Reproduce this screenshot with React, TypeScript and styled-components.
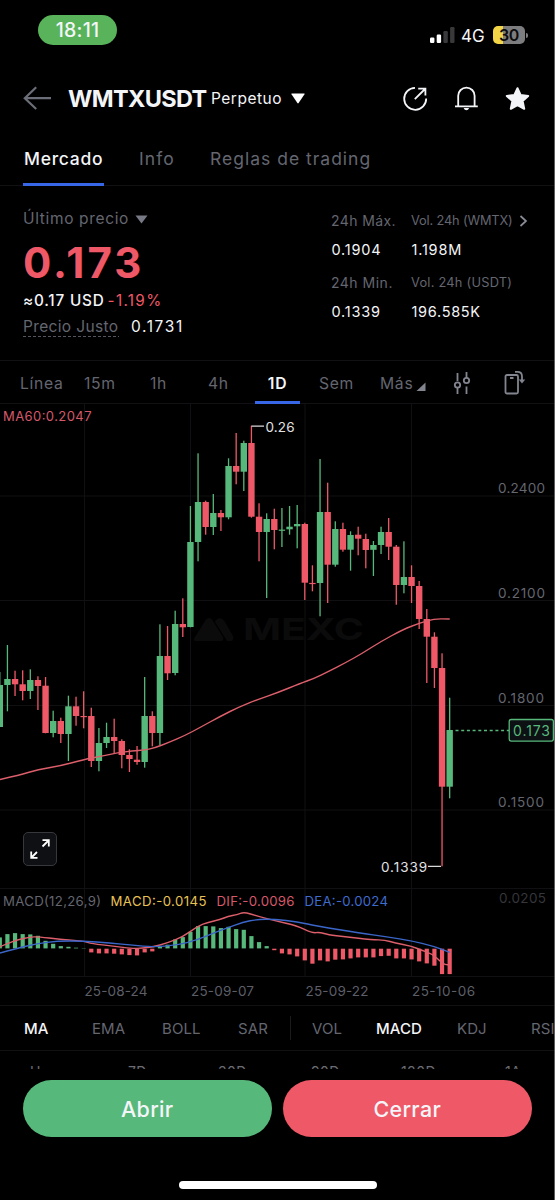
import React from "react";
import styled, { createGlobalStyle } from "styled-components";

const C = {
  bg: "#000000",
  line: "#111113",
  grid: "#101013",
  text: "#f4f5f8",
  muted: "#646670",
  icon: "#82858f",
  up: "#57b87b",
  down: "#ee5867",
  blue: "#3767e6",
  yellow: "#e9c254",
};

const Global = createGlobalStyle`
  * { box-sizing: border-box; }
  html, body { margin: 0; background: ${C.bg}; }
  body { font-family: Inter, "Liberation Sans", sans-serif; color: ${C.text}; }
  button { font: inherit; color: inherit; background: none; border: 0; padding: 0; text-align: left; }
`;

const Screen = styled.main`
  width: 555px;
  height: 1200px;
  overflow: hidden;
  display: flex;
  flex-direction: column;
  background: ${C.bg};
  border-right: 1px solid #5c5c5e;
`;

interface TextProps {
  $size?: number;
  $ls?: number;
  $color?: string;
  $weight?: number;
}
const Text = styled.span<TextProps>`
  font-size: ${(p) => p.$size ?? 15}px;
  letter-spacing: ${(p) => p.$ls ?? 0}px;
  color: ${(p) => p.$color ?? C.text};
  font-weight: ${(p) => p.$weight ?? 400};
  line-height: 20px;
  white-space: nowrap;
`;

/* Status bar */
const StatusBar = styled.header`
  height: 66px;
  flex: none;
  display: flex;
  justify-content: space-between;
  padding: 15px 26px 0 38px;
`;
const TimePill = styled.div`
  width: 79px;
  height: 30px;
  border-radius: 15px;
  background: #59b35a;
  display: flex;
  align-items: center;
  justify-content: center;
  font-size: 19.5px;
  font-weight: 500;
  letter-spacing: 0.2px;
`;
const StatusRight = styled.div`
  display: flex;
  align-items: center;
  height: 40px;
`;
const Network = styled.span`
  font-size: 17px;
  font-weight: 400;
  width: 32px;
  margin-left: 6px;
  padding-top: 1px;
`;
const Battery = styled.div`
  width: 32px;
  height: 18px;
  border-radius: 5px;
  background: linear-gradient(90deg, #f3d548 0 10px, #7d7d80 10px);
  color: #0c0c0c;
  font-size: 16px;
  font-weight: 600;
  line-height: 18px;
  text-align: center;
  letter-spacing: -0.3px;
`;
const BatteryNub = styled.div`
  width: 2px;
  height: 5px;
  margin-left: 1px;
  border-radius: 0 2px 2px 0;
  background: #7d7d80;
`;

/* Header */
const Header = styled.div`
  height: 64px;
  flex: none;
  display: flex;
  align-items: center;
  padding: 0 24px 0 23px;
`;
const PairButton = styled.button`
  display: flex;
  align-items: center;
  margin-left: 17px;
`;
const PairName = styled.h1`
  margin: 0;
  width: 143px;
  padding-top: 1px;
  font-size: 23.5px;
  font-weight: 700;
  letter-spacing: -0.65px;
  line-height: 28px;
  white-space: nowrap;
`;
const PairKind = styled.span`
  width: 80px;
  padding-top: 2px;
  font-size: 15.5px;
  letter-spacing: 0.5px;
  line-height: 20px;
`;
const HeaderIcons = styled.div`
  margin-left: auto;
  display: flex;
  gap: 26px;
`;

/* Page tabs */
const PageTabs = styled.nav`
  height: 56px;
  flex: none;
  display: flex;
  padding-left: 23px;
  gap: 34px;
  border-bottom: 1px solid ${C.line};
`;
const PageTab = styled.button<{ $active?: boolean; $width: number; $ls: number }>`
  width: ${(p) => p.$width}px;
  height: 56px;
  padding-left: 1px;
  padding-top: 3px;
  font-size: 17.5px;
  font-weight: ${(p) => (p.$active ? 500 : 400)};
  letter-spacing: ${(p) => p.$ls}px;
  white-space: nowrap;
  color: ${(p) => (p.$active ? C.text : C.muted)};
  border-bottom: 3px solid ${(p) => (p.$active ? C.blue : "transparent")};
`;

/* Price summary */
const Summary = styled.section`
  height: 174px;
  flex: none;
  display: flex;
  justify-content: space-between;
  padding: 22px 20px 0 23px;
`;
const PriceBlock = styled.div`
  display: flex;
  flex-direction: column;
  padding-top: 1px;
`;
const Line = styled.div<{ $gap?: number; $mt?: number }>`
  display: flex;
  align-items: center;
  height: 20px;
  gap: ${(p) => p.$gap ?? 0}px;
  margin-top: ${(p) => p.$mt ?? 0}px;
`;
const BigPrice = styled.div`
  margin-top: 14px;
  height: 40px;
  line-height: 40px;
  font-size: 42px;
  font-weight: 700;
  letter-spacing: 3px;
  color: ${C.down};
`;
const Dashed = styled(Text)`
  width: 96px;
  background: repeating-linear-gradient(90deg, #55565e 0 3px, transparent 3px 5px) left bottom / 100% 1px no-repeat;
`;
const Stats = styled.div`
  display: grid;
  grid-template-columns: 80px 120px;
  grid-template-rows: 28px 34px 28px 28px;
  padding-top: 3px;
  margin-right: -20px;
  width: 223px;
`;
const Value = styled(Text)`
  font-size: 14.5px;
  padding: 0.5px 0 0 0.5px;
`;

/* Time frames */
const Frames = styled.nav`
  height: 44px;
  flex: none;
  display: grid;
  grid-template-columns: 64px 66px 58px 47px 64px 61px 73px 51px 40px;
  padding-left: 20px;
  border-top: 1px solid ${C.line};
  border-bottom: 1px solid ${C.line};
`;
const Frame = styled.button<{ $active?: boolean }>`
  display: flex;
  align-items: center;
  height: 43px;
  padding-top: 1px;
  font-size: 15.7px;
  letter-spacing: 0.7px;
  white-space: nowrap;
  color: ${(p) => (p.$active ? C.text : C.muted)};
  font-weight: ${(p) => (p.$active ? 600 : 400)};
  ${(p) =>
    p.$active &&
    `width: 45px; justify-content: center; border-bottom: 3px solid ${C.blue}; padding-top: 4px;`}
`;

/* Chart */
const ChartArea = styled.section`
  position: relative;
  height: 601px;
  flex: none;
  svg { display: block; }
`;
const ExpandButton = styled.button`
  position: absolute;
  left: 23px;
  top: 428px;
  width: 34px;
  height: 34px;
  border: 1px solid #37383d;
  border-radius: 5px;
  background: #0f1013;
  display: flex;
  align-items: center;
  justify-content: center;
`;

/* Indicators */
const Indicators = styled.nav`
  height: 46px;
  flex: none;
  display: grid;
  align-items: center;
  grid-template-columns: 68px 70px 76px 52px 22px 64px 81px 74px 40px;
  padding-left: 24px;
  border-top: 1px solid ${C.line};
  border-bottom: 1px solid ${C.line};
`;
const Indicator = styled.button<{ $active?: boolean }>`
  font-size: 15px;
  letter-spacing: 0.1px;
  color: ${(p) => (p.$active ? C.text : C.muted)};
  font-weight: ${(p) => (p.$active ? 500 : 400)};
`;
const Divider = styled.i`
  width: 1px;
  height: 24px;
  background: #1b1b1e;
`;

const Ranges = styled.div`
  height: 18px;
  flex: none;
  overflow: hidden;
  display: grid;
  grid-template-columns: 98px 90px 93px 90px 104px 40px;
  padding: 11px 0 0 30px;
  line-height: 20px;
  font-size: 14px;
  letter-spacing: 0.4px;
  color: #6c6d74;
`;

/* Bottom actions */
const Actions = styled.footer`
  flex: none;
  display: flex;
  gap: 11.5px;
  padding: 11px 22.5px 0 23px;
`;
const Action = styled.button<{ $color: string }>`
  flex: 1;
  height: 57px;
  border-radius: 29px;
  background: ${(p) => p.$color};
  text-align: center;
  font-size: 21.5px;
  font-weight: 500;
  letter-spacing: 0.3px;
`;
const HomeBar = styled.div`
  flex: none;
  width: 197.5px;
  height: 7.5px;
  margin: 44px 0 0 179px;
  border-radius: 4px;
  background: #fff;
`;

type Candle = [up: 0 | 1, high: number, low: number, top: number, bottom: number];
const candles: Candle[] = [
  [1, 672, 727, 685, 727], [1, 645, 711.3, 679, 685], [0, 670.7, 696, 679, 684.3],
  [0, 670.3, 700.3, 684.3, 691], [1, 669.3, 699, 680, 691], [0, 676.3, 710, 680, 686],
  [0, 677, 733.3, 685.7, 733], [1, 710.7, 737.3, 721, 733], [0, 717.7, 743, 721, 734],
  [1, 695.7, 761, 706.3, 734], [0, 696.7, 725.7, 706.3, 716], [0, 691.3, 728.3, 716, 717.2],
  [0, 707.7, 767, 716, 761], [1, 728, 771.3, 743, 761], [1, 722.7, 748, 737, 743],
  [0, 718.7, 753.3, 737, 741], [0, 739.3, 768.3, 741, 755], [0, 749.3, 772, 755, 759],
  [0, 746, 764.7, 759.7, 762], [1, 677, 767.7, 716, 762], [0, 711.3, 746.3, 716, 733],
  [1, 624.3, 745, 656, 733], [0, 626, 680, 656, 673.3], [1, 610.7, 675.3, 624, 673],
  [0, 598.3, 637, 624, 627.3], [1, 506, 627.3, 542, 627], [1, 453.3, 561.3, 502, 542],
  [0, 500.7, 534.7, 502, 527], [1, 494, 535, 513, 527], [0, 510, 531, 513, 517.3],
  [1, 458.3, 519.3, 466, 517.3], [0, 433, 484.3, 466, 471.7], [1, 440.7, 491, 443, 471.7],
  [0, 425.7, 517.7, 443, 516.7], [0, 503.3, 561.3, 516.7, 532], [1, 513.3, 598, 519, 532],
  [0, 508.7, 549.3, 519, 530], [1, 508, 547, 529.6, 530.8], [1, 506, 534.7, 526.7, 529.3],
  [1, 505, 548.3, 524, 526.3], [0, 522.7, 600, 524, 582.7], [0, 565.3, 591.3, 582.9, 584.1],
  [1, 459, 616.3, 512, 583], [0, 482.7, 603, 512, 564.7], [1, 521.3, 566.7, 529, 564.7],
  [0, 522.7, 551.7, 529, 549.7], [1, 531.3, 570.7, 535, 549.7], [0, 526.7, 555.3, 534.7, 538.7],
  [0, 533.7, 568.3, 539, 550], [1, 541, 576, 545, 549.8], [1, 526.7, 554, 532, 545],
  [0, 518, 560, 532, 546.7], [0, 545, 604.7, 546.7, 585], [1, 541.3, 593.3, 577, 585],
  [0, 565.3, 603, 577, 586], [0, 581, 629, 586, 619], [0, 609, 683, 619, 636.7],
  [0, 632.3, 688, 636.7, 668], [0, 653.3, 866.3, 668, 786.7], [1, 697.7, 798.3, 730, 786.7],
];

const histogram = [
  11, 14.3, 15.3, 14.3, 14, 12.6, 7.6, 4.6, 2.3, 1.6, 0.7, 0.3, -3.7, -4.7, -4.7, -5, -5.7, -6.4, -6.7,
  -3.7, -2.7, 1.7, 3.7, 9, 11.3, 16.6, 22.3, 22.3, 22, 20.3, 21.6, 19.3, 18.6, 12.3, 6.3, 2.3, -1.5,
  -4.7, -5.7, -7.7, -11.7, -15, -11.7, -12.7, -11, -10.7, -9.7, -8.7, -8.7, -8.7, -7.4, -7.1, -9.7,
  -9.7, -10.7, -12.7, -14.7, -17, -25.4, -25.4,
];

const ma60: [number, number][] = [
  [0, 779.5], [20, 775], [38, 769.5], [60, 766], [84, 759.5], [100, 756.5], [118, 752.7], [132, 751],
  [145, 750], [155, 747.8], [168, 742.7], [185, 735.5], [200, 727.5], [220, 716.5], [240, 706.5],
  [257.3, 699.7], [278, 692.5], [300, 683.5], [314, 678.5], [328, 671.7], [345, 663], [362, 653.5],
  [380, 642], [403, 629.5], [420, 623], [434, 618.8], [449.7, 619],
];
const dif: [number, number][] = [
  [0, 946.7], [7, 943.7], [17, 940], [30, 937], [38, 936.7], [60, 939.3], [83, 941], [92, 943.7],
  [113, 946], [133, 948.7], [142, 948], [153, 947], [167, 943], [183, 936.7], [198, 926], [208, 922.3],
  [220, 919.7], [228, 916.3], [237, 914.7], [244, 912], [257, 916], [275, 920.7], [297, 925.7],
  [312, 933], [320, 932.3], [328, 934.7], [345, 936.7], [372, 939.7], [385, 940], [395, 943],
  [411, 946], [421, 950], [433, 954.3], [441, 962], [445, 964.7], [449.7, 964.7],
];
const dea: [number, number][] = [
  [0, 953], [17, 948.3], [37, 943.7], [57, 941], [83, 941], [110, 943], [133, 945.3], [153, 947],
  [177, 945.3], [197, 940], [213, 933.3], [227, 928], [243, 922.3], [257, 919.3], [275, 919.3],
  [297, 921.7], [318, 926.3], [358, 932.7], [388, 937], [411, 940.7], [433, 946], [449.7, 952.3],
];

const xOf = (i: number) => -0.2 + i * 7.625;

const smooth = (pts: [number, number][]) => {
  let d = `M${pts[0][0]} ${pts[0][1]}`;
  for (let i = 1; i < pts.length - 1; i++) {
    const [x, y] = pts[i];
    const [nx, ny] = pts[i + 1];
    d += ` Q${x} ${y} ${(x + nx) / 2} ${(y + ny) / 2}`;
  }
  const last = pts[pts.length - 1];
  return `${d} L${last[0]} ${last[1]}`;
};

const Label = ({ x, y, w, size = 13.5, fill = C.muted, children }: {
  x: number; y: number; w: number; size?: number; fill?: string; children: string;
}) => (
  <text x={x} y={y} fontSize={size} textLength={w} fill={fill}>{children}</text>
);

const Chart = () => (
  <svg width="554" height="601" viewBox="0 404 554 601" fontFamily='Inter, "Liberation Sans", sans-serif'>
    <g stroke={C.grid}>
      {[84.5, 190.5, 305, 411.5].map((x) => <path key={x} d={`M${x} 404V976`} />)}
      {[496, 600.5, 705.5, 810, 888.5, 976.5].map((y) => <path key={y} d={`M0 ${y}H554`} />)}
    </g>
    <g fill="#0b0b0c">
      <path d="M195 641c-2-1-1-3 0-4l10-16c2-4 6-4 8 0l10 16c1 2 0 4-2 4z" />
      <path d="M215 622c2-5 7-5 10 0l8 14c1 3 0 5-3 5h-3z" />
      <text x="243" y="640" fontSize="30" fontWeight="700" textLength="121" lengthAdjust="spacingAndGlyphs">MEXC</text>
    </g>
    {candles.map(([up, high, low, top, bottom], i) => (
      <g key={i} fill={up ? C.up : C.down}>
        <rect x={xOf(i) - 0.65} y={high} width="1.3" height={low - high} />
        <rect x={xOf(i) - 3.2} y={top} width="6.4" height={bottom - top} />
      </g>
    ))}
    <path d={smooth(ma60)} fill="none" stroke="#dc5f6b" strokeWidth="1.4" />
    <path d="M251.5 426.2H264M428 866.3H441" stroke="#d9d9dc" strokeWidth="1.2" />
    <Label x={265.5} y={431.5} w={29} fill="#e2e2e5">0.26</Label>
    <Label x={381} y={871.5} w={46} fill="#e2e2e5">0.1339</Label>
    <Label x={3} y={420.7} w={88.5} size={13} fill="#d6596a">MA60:0.2047</Label>
    <Label x={498} y={493.2} w={47}>0.2400</Label>
    <Label x={498} y={598} w={47}>0.2100</Label>
    <Label x={498} y={702.7} w={46}>0.1800</Label>
    <Label x={498} y={807.3} w={46}>0.1500</Label>
    <path d="M455.5 730.5H509" stroke={C.up} strokeWidth="1.3" strokeDasharray="3 2.7" />
    <rect x="509.2" y="719.5" width="44.2" height="21.6" rx="2" fill="#0e1114" stroke={C.up} strokeWidth="1.3" />
    <Label x={513} y={735.8} w={37} size={14} fill={C.up}>0.173</Label>

    {histogram.map((v, i) => (
      <rect key={i} x={xOf(i) - 2.1} y={v > 0 ? 948.4 - v : 948.7} width="4.2" height={Math.abs(v)} fill={v > 0 ? C.up : C.down} />
    ))}
    <path d={smooth(dif)} fill="none" stroke="#dc5f6b" strokeWidth="1.4" />
    <path d={smooth(dea)} fill="none" stroke="#3b66c9" strokeWidth="1.4" />
    <Label x={3} y={905.5} w={98} size={13.2}>MACD(12,26,9)</Label>
    <Label x={110.5} y={905.5} w={96} size={13.2} fill={C.yellow}>MACD:-0.0145</Label>
    <Label x={216.5} y={905.5} w={78} size={13.2} fill="#d6596a">DIF:-0.0096</Label>
    <Label x={304.5} y={905.5} w={83.5} size={13.2} fill="#3f6bcd">DEA:-0.0024</Label>
    <Label x={499} y={902.8} w={47} fill="#35363b">0.0205</Label>
    <Label x={84.5} y={996.2} w={63} fill="#5d5f68">25-08-24</Label>
    <Label x={191} y={996.2} w={63} fill="#5d5f68">25-09-07</Label>
    <Label x={305.5} y={996.2} w={63} fill="#5d5f68">25-09-22</Label>
    <Label x={412} y={996.2} w={63} fill="#5d5f68">25-10-06</Label>
  </svg>
);

export default function App() {
  return (
    <Screen>
      <Global />
      <StatusBar>
        <TimePill>18:11</TimePill>
        <StatusRight>
          <svg width="25" height="17" viewBox="0 0 25 17">
            <rect x="0" y="10.5" width="4.4" height="5.5" rx="1.2" fill="#fff" />
            <rect x="6.7" y="7.5" width="4.4" height="8.5" rx="1.2" fill="#fff" />
            <rect x="13.4" y="4" width="4.4" height="12" rx="1.2" fill="#39393b" />
            <rect x="20.1" y="0" width="4.4" height="16" rx="1.2" fill="#39393b" />
          </svg>
          <Network>4G</Network>
          <Battery>30</Battery>
          <BatteryNub />
        </StatusRight>
      </StatusBar>

      <Header>
        <svg width="28" height="24" viewBox="0 0 28 24" fill="none" stroke="#6b6e78" strokeWidth="2.2">
          <path d="M28 12.2H2M13.2 1.2 1.8 12.2 13.2 23" />
        </svg>
        <PairButton>
          <PairName>WMTXUSDT</PairName>
          <PairKind>Perpetuo</PairKind>
          <svg width="14" height="11" viewBox="0 0 14 11"><path d="M.8.5h12.4q.8 0 .3.8L7.6 10q-.6.8-1.2 0L.5 1.3Q0 .5.8.5z" fill="#fff" /></svg>
        </PairButton>
        <HeaderIcons>
          <svg width="25" height="25" viewBox="0 0 25 25" fill="none" stroke="#f4f5f8" strokeWidth="1.8">
            <path d="M12 1.8A11 11 0 1 0 23.2 12.6M11.8 13.2 22 3M15.2 2.6H22.4V9.6" />
          </svg>
          <svg width="25" height="25" viewBox="0 0 25 25" fill="none" stroke="#f4f5f8" strokeWidth="1.8">
            <path d="M4.2 20V9.8a8.2 8.2 0 0 1 16.4 0V20M1 20.3H23.8" />
            <path d="M9.6 22h5.6q-1 2.2-2.8 2.2T9.6 22z" fill="#f4f5f8" stroke="none" />
          </svg>
          <svg width="25" height="25" viewBox="0 0 25 25">
            <path d="M12.5 2.2 15.6 9 23.2 9.9 17.6 15 19.2 22.8 12.5 19.2 5.8 22.8 7.4 15 1.8 9.9 9.4 9z" fill="#f4f5f8" stroke="#f4f5f8" strokeWidth="2" strokeLinejoin="round" />
          </svg>
        </HeaderIcons>
      </Header>

      <PageTabs>
        <PageTab $active $width={81} $ls={0.7}>Mercado</PageTab>
        <PageTab $width={37} $ls={1.1}>Info</PageTab>
        <PageTab $width={165} $ls={1}>Reglas de trading</PageTab>
      </PageTabs>

      <Summary>
        <PriceBlock>
          <Line $gap={6}>
            <Text $size={15.5} $ls={0.65} $color={C.muted}>Último precio</Text>
            <svg width="13" height="9" viewBox="0 0 13 9"><path d="M.5.5h12L6.5 8.5z" fill="#777a85" /></svg>
          </Line>
          <BigPrice>0.173</BigPrice>
          <Line $gap={3} $mt={8}>
            <Text $size={15.3} $ls={0.8} $weight={500}>≈0.17 USD</Text>
            <Text $size={15.3} $ls={1.3} $color={C.down}>-1.19%</Text>
          </Line>
          <Line $gap={12} $mt={6}>
            <Dashed $size={15.5} $ls={0.35} $color={C.muted}>Precio Justo</Dashed>
            <Text $size={15.5} $ls={1.6}>0.1731</Text>
          </Line>
        </PriceBlock>
        <Stats>
          <Text $size={14} $ls={0.4} $color={C.muted}>24h Máx.</Text>
          <Line $gap={6}>
            <Text $size={12.8} $ls={-0.15} $color={C.muted}>Vol. 24h (WMTX)</Text>
            <svg width="9" height="12" viewBox="0 0 9 12" fill="none" stroke="#8a8d97" strokeWidth="1.7"><path d="M1.5 1 7 6 1.5 11" /></svg>
          </Line>
          <Value $ls={0.8}>0.1904</Value>
          <Value $ls={0.8}>1.198M</Value>
          <Text $size={14} $ls={0.5} $color={C.muted}>24h Min.</Text>
          <Text $size={12.8} $ls={0.25} $color={C.muted}>Vol. 24h (USDT)</Text>
          <Value $ls={0.8}>0.1339</Value>
          <Value $ls={0.7}>196.585K</Value>
        </Stats>
      </Summary>

      <Frames>
        <Frame>Línea</Frame>
        <Frame>15m</Frame>
        <Frame>1h</Frame>
        <Frame>4h</Frame>
        <Frame $active>1D</Frame>
        <Frame>Sem</Frame>
        <Frame>
          Más
          <svg width="14" height="20" viewBox="0 0 14 20"><path d="M12.5 9.5v8.500H3.500z" fill={C.icon} /></svg>
        </Frame>
        <Frame>
          <svg width="18" height="23" viewBox="0 0 18 23" fill="none" stroke={C.icon} strokeWidth="1.8">
            <path d="M4.5 1V9M4.5 16v6M13.5 0v6M13.5 14.5V22" />
            <circle cx="4.5" cy="13" r="2.7" /><circle cx="13.5" cy="8.5" r="2.7" />
          </svg>
        </Frame>
        <Frame>
          <svg width="22" height="25" viewBox="0 0 22 25" fill="none" stroke={C.icon} strokeWidth="1.8">
            <rect x="1.5" y="4" width="12.5" height="18.5" rx="1.5" />
            <path d="M6 7h3.500M11 .9h2.500q4.500 0 4.500 4.500v5" />
            <path d="M14.8 8.500h6.400L18 12.500z" fill={C.icon} stroke="none" />
          </svg>
        </Frame>
      </Frames>

      <ChartArea>
        <Chart />
        <ExpandButton aria-label="Expandir">
          <svg width="20" height="20" viewBox="0 0 20 20" fill="none" stroke="#fff" strokeWidth="1.8">
            <path d="M12.500 7.500 18.500 1.500M12.500 1.200h6.300V7.500M7 13l-5.500 5.500M1.200 12.500v6.300H7.500" />
          </svg>
        </ExpandButton>
      </ChartArea>

      <Indicators>
        <Indicator $active>MA</Indicator>
        <Indicator>EMA</Indicator>
        <Indicator>BOLL</Indicator>
        <Indicator>SAR</Indicator>
        <Divider />
        <Indicator>VOL</Indicator>
        <Indicator $active>MACD</Indicator>
        <Indicator>KDJ</Indicator>
        <Indicator>RSI</Indicator>
      </Indicators>

      <Ranges>
        <span>Hoy</span><span>7D</span><span>30D</span><span>90D</span><span>180D</span><span>1A</span>
      </Ranges>

      <Actions>
        <Action $color={C.up}>Abrir</Action>
        <Action $color={C.down}>Cerrar</Action>
      </Actions>
      <HomeBar />
    </Screen>
  );
}
